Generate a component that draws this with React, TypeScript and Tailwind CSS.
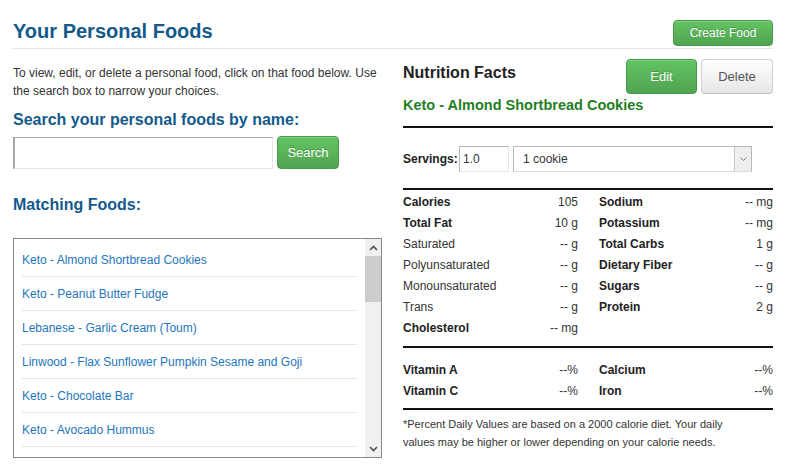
import React from "react";

const foods = [
  "Keto - Almond Shortbread Cookies",
  "Keto - Peanut Butter Fudge",
  "Lebanese - Garlic Cream (Toum)",
  "Linwood - Flax Sunflower Pumpkin Sesame and Goji",
  "Keto - Chocolate Bar",
  "Keto - Avocado Hummus",
];

type Cell = { label: string; value: string; bold: boolean } | null;

const rows: [Cell, Cell][] = [
  [{ label: "Calories", value: "105", bold: true }, { label: "Sodium", value: "-- mg", bold: true }],
  [{ label: "Total Fat", value: "10 g", bold: true }, { label: "Potassium", value: "-- mg", bold: true }],
  [{ label: "Saturated", value: "-- g", bold: false }, { label: "Total Carbs", value: "1 g", bold: true }],
  [{ label: "Polyunsaturated", value: "-- g", bold: false }, { label: "Dietary Fiber", value: "-- g", bold: true }],
  [{ label: "Monounsaturated", value: "-- g", bold: false }, { label: "Sugars", value: "-- g", bold: true }],
  [{ label: "Trans", value: "-- g", bold: false }, { label: "Protein", value: "2 g", bold: true }],
  [{ label: "Cholesterol", value: "-- mg", bold: true }, null],
];

const vitamins: [Cell, Cell][] = [
  [{ label: "Vitamin A", value: "--%", bold: true }, { label: "Calcium", value: "--%", bold: true }],
  [{ label: "Vitamin C", value: "--%", bold: true }, { label: "Iron", value: "--%", bold: true }],
];

function Half({ cell, w }: { cell: Cell; w: string }) {
  return (
    <div className={`${w} flex justify-between items-center`}>
      {cell && (
        <>
          <span className={cell.bold ? "font-bold text-[#222]" : "text-[#333]"}>{cell.label}</span>
          <span className="text-[#333]">{cell.value}</span>
        </>
      )}
    </div>
  );
}

function NutRow({ r }: { r: [Cell, Cell] }) {
  return (
    <div className="flex h-[21px] items-center gap-[21px] text-[12px]">
      <Half cell={r[0]} w="w-[175px]" />
      <Half cell={r[1]} w="w-[174px]" />
    </div>
  );
}

const greenBtn =
  "bg-linear-to-b from-[#62c462] to-[#51a351] border border-[#46984a] rounded-[4px] text-white [text-shadow:0_-1px_0_rgba(0,0,0,0.2)] shadow-[inset_0_1px_0_rgba(255,255,255,0.2)]";

export default function App() {
  return (
    <div className="w-[796px] h-[468px] bg-white overflow-hidden text-[#333] font-['Liberation_Sans',Arial,sans-serif]">
      <div className="ml-[13px] w-[760px]">
        {/* header */}
        <div className="mt-[20px] h-[29px] border-b border-[#e5e5e5] flex justify-between items-start">
          <h1 className="text-[20px] leading-[22px] font-bold text-[#135a8b]">Your Personal Foods</h1>
          <button className={`${greenBtn} w-[100px] h-[26px] text-[12px]`}>Create Food</button>
        </div>

        <div className="flex gap-[21px]">
          {/* left column */}
          <div className="w-[369px] pt-[15px]">
            <p className="text-[12px] leading-[18px] text-[#333]">
              To view, edit, or delete a personal food, click on that food below. Use the search box to narrow your choices.
            </p>
            <h2 className="mt-[10px] text-[16px] leading-[20px] font-bold text-[#135a8b]">
              Search your personal foods by name:
            </h2>
            <div className="mt-[6px] flex items-start gap-[4px]">
              <input
                className="mt-[1px] w-[260px] h-[32px] bg-white border border-t-[#a8a8a8] border-l-2 border-l-[#a8a8a8] border-r-[#e6e6e6] border-b-[#e6e6e6] outline-none"
                defaultValue=""
              />
              <button className={`${greenBtn} w-[62px] h-[33px] text-[13px]`}>Search</button>
            </div>
            <h2 className="mt-[26px] text-[16px] leading-[20px] font-bold text-[#135a8b]">Matching Foods:</h2>
            <div className="mt-[23px] h-[220px] border border-[#888] flex">
              <div className="flex-1 overflow-hidden pl-[8px] pr-[8px] pt-[4px]">
                {foods.map((f) => (
                  <div key={f} className="h-[34px] border-b border-[#e5e5e5] flex items-center text-[12px] text-[#1e76bd]">
                    {f}
                  </div>
                ))}
              </div>
              <div className="w-[16px] bg-[#f0f0f0] flex flex-col">
                <div className="h-[17px] flex items-center justify-center">
                  <svg width="9" height="6" viewBox="0 0 9 6">
                    <path d="M1 5 L4.5 1.5 L8 5" fill="none" stroke="#505050" strokeWidth="1.6" />
                  </svg>
                </div>
                <div className="h-[46px] bg-[#cdcdcd]" />
                <div className="flex-1" />
                <div className="h-[17px] flex items-center justify-center">
                  <svg width="9" height="6" viewBox="0 0 9 6">
                    <path d="M1 1 L4.5 4.5 L8 1" fill="none" stroke="#505050" strokeWidth="1.6" />
                  </svg>
                </div>
              </div>
            </div>
          </div>

          {/* right column */}
          <div className="w-[370px] pt-[10px]">
            <div className="flex justify-between items-start h-[35px]">
              <div className="mt-[4px] text-[16px] leading-[20px] font-bold text-[#222]">Nutrition Facts</div>
              <div className="flex gap-[4px]">
                <button className={`${greenBtn} w-[71px] h-[35px] text-[13px]`}>Edit</button>
                <button className="w-[72px] h-[35px] text-[13px] rounded-[4px] border border-[#cfcfcf] border-b-[#bdbdbd] bg-linear-to-b from-[#ffffff] to-[#e6e6e6] text-[#555]">
                  Delete
                </button>
              </div>
            </div>
            <div className="mt-[2px] text-[14.5px] leading-[18px] font-bold text-[#1f7e1f]">
              Keto - Almond Shortbread Cookies
            </div>
            <div className="mt-[12px] h-[2px] bg-[#111]" />
            <div className="mt-[18px] h-[26px] flex items-center text-[12px]">
              <span className="w-[56px] font-bold text-[#222]">Servings:</span>
              <input
                className="w-[50px] h-[26px] px-[3px] text-[12px] text-[#333] bg-white border border-t-[#b5b5b5] border-l-[#b5b5b5] border-r-[#e6e6e6] border-b-[#e6e6e6] outline-none"
                defaultValue="1.0"
              />
              <div className="ml-[4px] w-[239px] h-[26px] flex border border-[#b8b8b8] border-b-[#dcdcdc] bg-white">
                <div className="flex-1 flex items-center pl-[9px] text-[#333]">1 cookie</div>
                <div className="w-[17px] border-l border-[#c8c8c8] bg-[#eeeeee] flex items-center justify-center">
                  <svg width="9" height="6" viewBox="0 0 9 6">
                    <path d="M1.5 1.5 L4.5 4.5 L7.5 1.5" fill="none" stroke="#777" strokeWidth="1" />
                  </svg>
                </div>
              </div>
            </div>
            <div className="mt-[16px] h-[2px] bg-[#111]" />
            <div className="pt-[1px]">
              {rows.map((r, i) => (
                <NutRow key={i} r={r} />
              ))}
            </div>
            <div className="mt-[8px] h-[2px] bg-[#111]" />
            <div className="mt-[11px]">
              {vitamins.map((r, i) => (
                <NutRow key={i} r={r} />
              ))}
            </div>
            <div className="mt-[7px] h-[2px] bg-[#111]" />
            <p className="mt-[5px] max-w-[340px] text-[11px] leading-[18px] text-[#333]">
              *Percent Daily Values are based on a 2000 calorie diet. Your daily values may be higher or lower depending on your calorie needs.
            </p>
          </div>
        </div>
      </div>
    </div>
  );
}
